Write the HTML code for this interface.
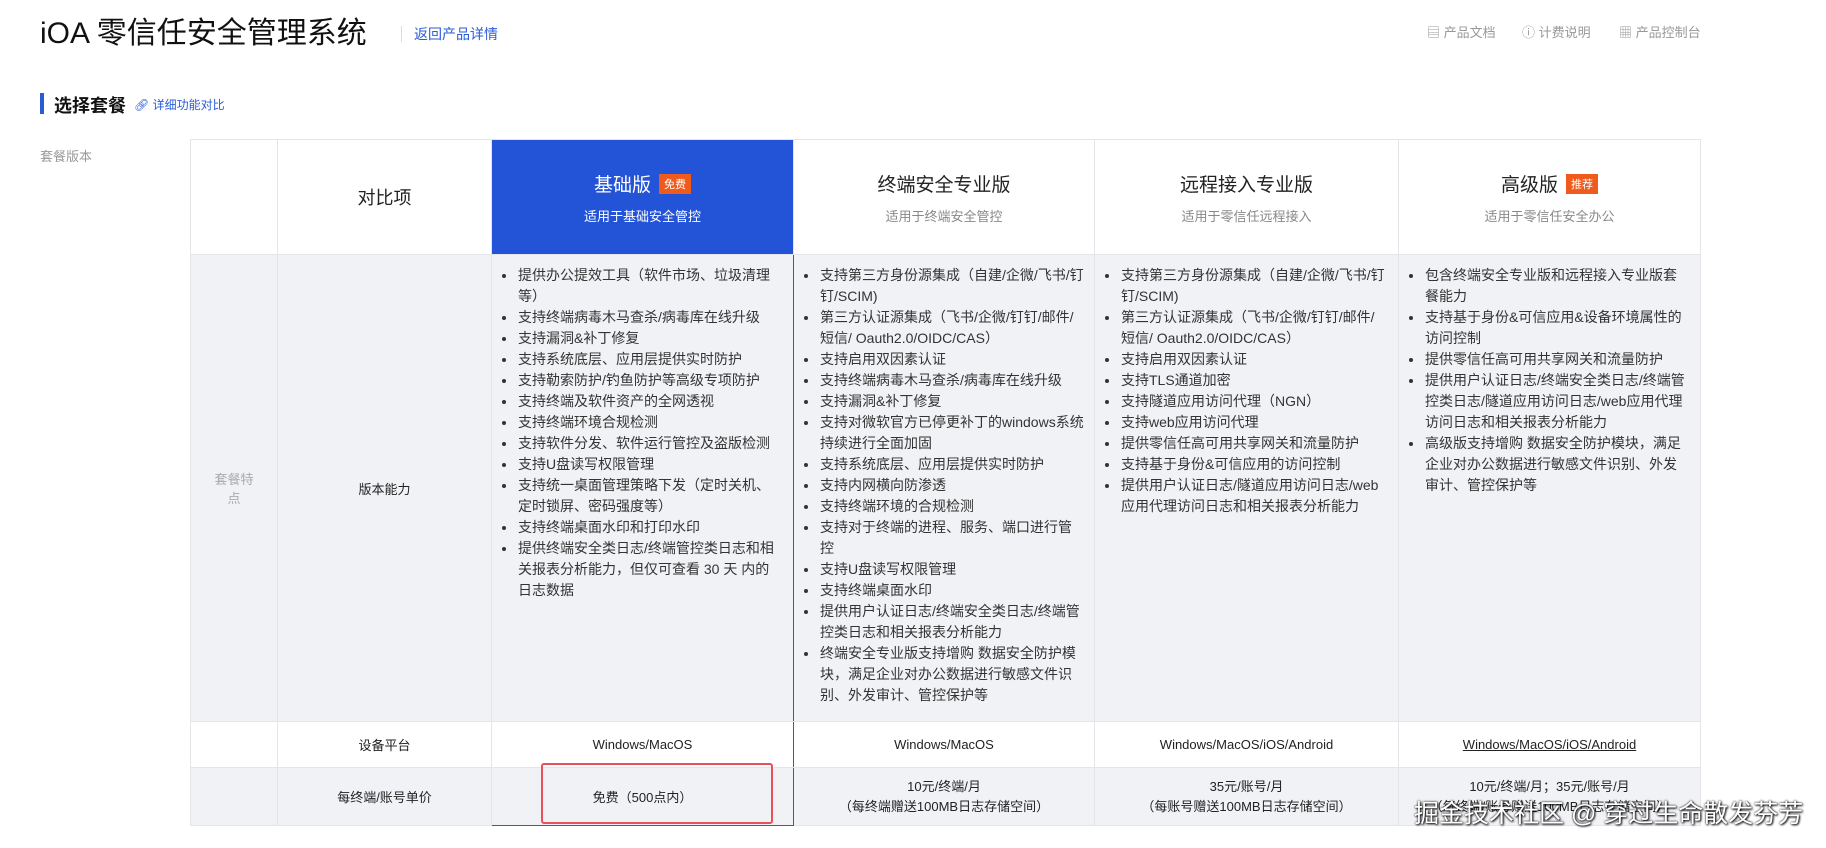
<!DOCTYPE html>
<html><head><meta charset="utf-8">
<style>
*{margin:0;padding:0;box-sizing:border-box}
body{width:1826px;height:848px;background:#fff;font-family:"Liberation Sans","Noto Sans CJK SC",sans-serif;color:#222;position:relative;overflow:hidden}
.title{position:absolute;left:40px;top:8px;font-size:30px;color:#111;white-space:nowrap}
.sep{position:absolute;left:401px;top:26px;width:1px;height:16px;background:#ddd}
.back{position:absolute;left:414px;top:24px;font-size:14px;color:#2a5bd7}
.nav{position:absolute;top:22px;font-size:13px;color:#999;white-space:nowrap}
.sec{position:absolute;left:40px;top:93px;width:4px;height:21px;background:#2a5bd7}
.sech{position:absolute;left:54px;top:92px;font-size:18px;font-weight:bold;color:#111}
.cmp{position:absolute;left:134px;top:96px;font-size:12px;color:#2a5bd7}
.ver{position:absolute;left:40px;top:146px;font-size:13px;color:#999}
table{position:absolute;left:190px;top:139px;border-collapse:collapse;table-layout:fixed;width:1510px}
td{border:1px solid #e3e5e8;text-align:center;vertical-align:middle;font-size:13px}
.h td{height:115px}
.f td{height:467px;background:#f1f2f5}
.p td{height:46px}
.r td{height:58px;background:#f1f2f5}
.hn{font-size:19px;color:#222}
.hs{font-size:13px;color:#888;margin-top:9px}
.blue{background:#2353d6!important;color:#fff}
.blue .hn{color:#fff}.blue .hs{color:#fff}
.bc{border-left:1px solid #2a5bd7;border-right:1px solid #2a5bd7}
.badge{display:inline-block;background:#f05a1c;color:#fff;font-size:11px;padding:2px 5px;margin-left:8px;vertical-align:3px}
ul{text-align:left;list-style:none;font-size:14px;line-height:21px;color:#333;white-space:nowrap}
.f td.l{vertical-align:top;padding:10px 0 0 10px}
li{position:relative;padding-left:16px}
li:before{content:"";position:absolute;left:0;top:9px;width:4px;height:4px;border-radius:2px;background:#333}
.gray{color:#aaa}
.wm{position:absolute;left:1414px;top:794px;font-size:25px;color:#fff;text-shadow:0 0 2px #000,1px 1px 2px #000;white-space:nowrap}
.red{position:absolute;left:541px;top:763px;width:232px;height:61px;border:2px solid #e8505b;border-radius:3px}
</style></head><body>
<div class="title">iOA 零信任安全管理系统</div>
<div class="sep"></div>
<div class="back">返回产品详情</div>
<div class="nav" style="left:1427px">▤ 产品文档</div>
<div class="nav" style="left:1522px">ⓘ 计费说明</div>
<div class="nav" style="left:1619px">▦ 产品控制台</div>
<div class="sec"></div>
<div class="sech">选择套餐</div>
<div class="cmp">🔗︎ 详细功能对比</div>
<div class="ver">套餐版本</div>
<table>
<colgroup><col style="width:87px"><col style="width:214px"><col style="width:302px"><col style="width:301px"><col style="width:304px"><col style="width:302px"></colgroup>
<tr class="h"><td></td><td style="font-size:18px">对比项</td>
<td class="blue"><div class="hn">基础版<span class="badge">免费</span></div><div class="hs">适用于基础安全管控</div></td>
<td><div class="hn">终端安全专业版</div><div class="hs">适用于终端安全管控</div></td>
<td><div class="hn">远程接入专业版</div><div class="hs">适用于零信任远程接入</div></td>
<td><div class="hn">高级版<span class="badge">推荐</span></div><div class="hs">适用于零信任安全办公</div></td></tr>
<tr class="f"><td class="gray">套餐特<br>点</td><td>版本能力</td>
<td class="l bc"><ul>
<li>提供办公提效工具（软件市场、垃圾清理<br>等）</li><li>支持终端病毒木马查杀/病毒库在线升级</li><li>支持漏洞&amp;补丁修复</li><li>支持系统底层、应用层提供实时防护</li><li>支持勒索防护/钓鱼防护等高级专项防护</li><li>支持终端及软件资产的全网透视</li><li>支持终端环境合规检测</li><li>支持软件分发、软件运行管控及盗版检测</li><li>支持U盘读写权限管理</li><li>支持统一桌面管理策略下发（定时关机、<br>定时锁屏、密码强度等）</li><li>支持终端桌面水印和打印水印</li><li>提供终端安全类日志/终端管控类日志和相<br>关报表分析能力，但仅可查看 30 天 内的<br>日志数据</li></ul></td>
<td class="l"><ul>
<li>支持第三方身份源集成（自建/企微/飞书/钉<br>钉/SCIM)</li><li>第三方认证源集成（飞书/企微/钉钉/邮件/<br>短信/ Oauth2.0/OIDC/CAS）</li><li>支持启用双因素认证</li><li>支持终端病毒木马查杀/病毒库在线升级</li><li>支持漏洞&amp;补丁修复</li><li>支持对微软官方已停更补丁的windows系统<br>持续进行全面加固</li><li>支持系统底层、应用层提供实时防护</li><li>支持内网横向防渗透</li><li>支持终端环境的合规检测</li><li>支持对于终端的进程、服务、端口进行管<br>控</li><li>支持U盘读写权限管理</li><li>支持终端桌面水印</li><li>提供用户认证日志/终端安全类日志/终端管<br>控类日志和相关报表分析能力</li><li>终端安全专业版支持增购 数据安全防护模<br>块，满足企业对办公数据进行敏感文件识<br>别、外发审计、管控保护等</li></ul></td>
<td class="l"><ul>
<li>支持第三方身份源集成（自建/企微/飞书/钉<br>钉/SCIM)</li><li>第三方认证源集成（飞书/企微/钉钉/邮件/<br>短信/ Oauth2.0/OIDC/CAS）</li><li>支持启用双因素认证</li><li>支持TLS通道加密</li><li>支持隧道应用访问代理（NGN）</li><li>支持web应用访问代理</li><li>提供零信任高可用共享网关和流量防护</li><li>支持基于身份&amp;可信应用的访问控制</li><li>提供用户认证日志/隧道应用访问日志/web<br>应用代理访问日志和相关报表分析能力</li></ul></td>
<td class="l"><ul>
<li>包含终端安全专业版和远程接入专业版套<br>餐能力</li><li>支持基于身份&amp;可信应用&amp;设备环境属性的<br>访问控制</li><li>提供零信任高可用共享网关和流量防护</li><li>提供用户认证日志/终端安全类日志/终端管<br>控类日志/隧道应用访问日志/web应用代理<br>访问日志和相关报表分析能力</li><li>高级版支持增购 数据安全防护模块，满足<br>企业对办公数据进行敏感文件识别、外发<br>审计、管控保护等</li></ul></td></tr>
<tr class="p"><td></td><td>设备平台</td><td class="bc">Windows/MacOS</td><td>Windows/MacOS</td><td>Windows/MacOS/iOS/Android</td><td style="text-decoration:underline">Windows/MacOS/iOS/Android</td></tr>
<tr class="r"><td></td><td>每终端/账号单价</td><td class="bc" style="border-bottom:1px solid #2a5bd7">免费（500点内）</td><td style="line-height:20px">10元/终端/月<br>（每终端赠送100MB日志存储空间）</td><td style="line-height:20px">35元/账号/月<br>（每账号赠送100MB日志存储空间）</td><td style="line-height:20px">10元/终端/月；35元/账号/月<br>（每终端/账号赠送100MB日志存储空间）</td></tr>
</table>
<div class="red"></div>
<div class="wm">掘金技术社区 @ 穿过生命散发芬芳</div>
</body></html>
